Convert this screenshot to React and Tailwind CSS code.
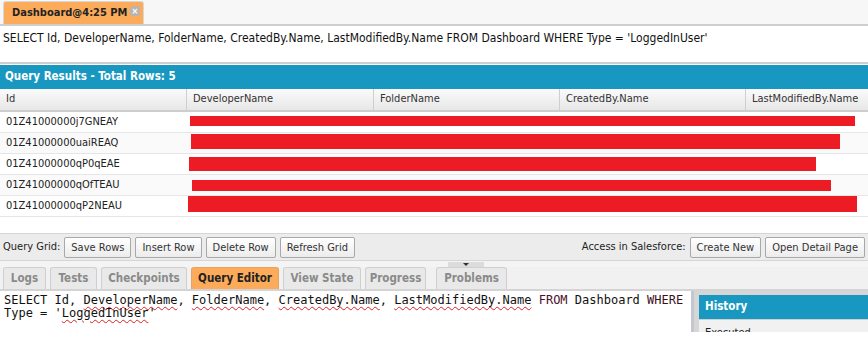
const rows = [
  { id: '01Z41000000j7GNEAY', x1: 190, x2: 855, top: 4, h: 10 },
  { id: '01Z41000000uaiREAQ', x1: 191, x2: 840, top: 1, h: 15 },
  { id: '01Z41000000qP0qEAE', x1: 189, x2: 816, top: 3, h: 14 },
  { id: '01Z41000000qOfTEAU', x1: 192, x2: 831, top: 5, h: 11 },
  { id: '01Z41000000qP2NEAU', x1: 188, x2: 857, top: 0, h: 16 },
]

const cols = ['Id', 'DeveloperName', 'FolderName', 'CreatedBy.Name', 'LastModifiedBy.Name']

const tabs = [
  { label: 'Logs', w: 'w-[43px]' },
  { label: 'Tests', w: 'w-[47px]' },
  { label: 'Checkpoints', w: 'w-[86px]' },
  { label: 'Query Editor', w: 'w-[88px]', active: true },
  { label: 'View State', w: 'w-[78px]' },
  { label: 'Progress', w: 'w-[61px]' },
  { label: 'Problems', w: 'w-[71px]' },
]

function Btn({ children }) {
  return (
    <button className="h-[21px] px-[6px] border border-[#a8a8a8] rounded-[2px] bg-gradient-to-b from-white to-[#ececec] text-[11px] text-[#333] leading-none whitespace-nowrap">
      {children}
    </button>
  )
}

function Sq({ children }) {
  return <span className="underline decoration-wavy decoration-[#e02020] decoration-1 underline-offset-2">{children}</span>
}

export default function App() {
  return (
    <div className="w-[868px] h-[348px] bg-white overflow-hidden text-[11px] text-[#222]" style={{ fontFamily: '"DejaVu Sans Condensed", "Liberation Sans", Arial, sans-serif' }}>
      <div className="h-[332px] flex flex-col overflow-hidden">
        {/* top tab bar */}
        <div className="h-[26px] shrink-0 flex items-end pl-[3px] bg-[#f7f7f7] border-b-2 border-[#cfcfcf]">
          <div className="h-[23px] w-[141px] flex items-center justify-between pl-[8px] pr-[3px] bg-[#fcab5b] border border-b-0 border-[#d8d8d8] rounded-t-[3px]">
            <span className="font-bold text-[11px] text-[#222] whitespace-nowrap">Dashboard@4:25 PM</span>
            <span className="w-[10px] h-[10px] mb-[4px] rounded-[3px] bg-[#b9b4ad] flex items-center justify-center text-white text-[9px] leading-none font-bold">×</span>
          </div>
        </div>

        {/* query text */}
        <div className="h-[38px] shrink-0 px-[3px] pt-[3px] text-[12px] text-[#111] border-b-2 border-[#cfcfcf] whitespace-nowrap">
          SELECT Id, DeveloperName, FolderName, CreatedBy.Name, LastModifiedBy.Name FROM Dashboard WHERE Type = 'LoggedInUser'
        </div>

        {/* results */}
        <div className="h-[24px] mt-[1px] shrink-0 bg-[#1897c0] flex items-center pl-[5px] text-white font-bold text-[11.5px]">
          Query Results - Total Rows: 5
        </div>
        <div className="h-[23px] shrink-0 grid grid-cols-[186px_187px_186px_186px_123px] bg-gradient-to-b from-[#fbfbfb] to-[#e7e7e7] border-b-2 border-[#cdcdcd]">
          {cols.map((c, i) => (
            <div key={c} className={`flex items-center pl-[6px] text-[#333] whitespace-nowrap overflow-hidden ${i > 0 ? 'border-l border-[#cfcfcf]' : ''}`}>{c}</div>
          ))}
        </div>
        {rows.map((r, i) => (
          <div key={r.id} className={`relative h-[21px] shrink-0 flex items-center pl-[6px] border-b border-[#e6e6e6] ${i % 2 ? 'bg-[#fafafa]' : 'bg-white'}`}>
            {r.id}
            <div className="absolute bg-[#ed1c24]" style={{ left: r.x1, width: r.x2 - r.x1, top: r.top, height: r.h }} />
          </div>
        ))}
        <div className="h-[16px] shrink-0" />

        {/* toolbar */}
        <div className="h-[27px] shrink-0 flex items-center justify-between px-[3px] bg-[#ececec] border-t border-[#d6d6d6]">
          <div className="flex items-center gap-[4px]">
            <span>Query Grid:</span>
            <Btn>Save Rows</Btn>
            <Btn>Insert Row</Btn>
            <Btn>Delete Row</Btn>
            <Btn>Refresh Grid</Btn>
          </div>
          <div className="flex items-center gap-[4px]">
            <span>Access in Salesforce:</span>
            <Btn>Create New</Btn>
            <Btn>Open Detail Page</Btn>
          </div>
        </div>

        {/* splitter */}
        <div className="h-[7px] shrink-0 bg-[#f4f4f4] border-t border-[#d6d6d6] flex justify-start pl-[448px]">
          <div className="w-[36px] h-[5px] mt-[1px] bg-[#dcdcdc] flex justify-center">
            <span className="w-0 h-0 mt-[1px] border-l-[3px] border-r-[3px] border-t-[3px] border-l-transparent border-r-transparent border-t-[#333]" />
          </div>
        </div>

        {/* bottom tabs */}
        <div className="h-[24px] shrink-0 flex items-end gap-[4px] pl-[3px] bg-[#f1f1f1] border-b-2 border-[#d4d4d4]">
          {tabs.map(t => (
            <div key={t.label} className={`${t.w} h-[22px] flex items-center justify-center rounded-t-[3px] border border-b-0 font-bold text-[11.5px] whitespace-nowrap ${t.active ? 'bg-[#fcab5b] border-[#e3a463] text-[#222]' : 'bg-[#e9e9e9] border-[#cfcfcf] text-[#8a8a8a]'} ${t.label === 'Problems' ? 'ml-[6px]' : ''}`}>
              {t.label}
            </div>
          ))}
        </div>

        {/* editor + history */}
        <div className="flex-1 flex bg-[#d6d6d6] min-h-0">
          <div className="w-[694px] bg-white border-r-[3px] border-[#c4c6d0] px-[4px] pt-[3px] text-[12px] leading-[12.5px] text-[#111]" style={{ fontFamily: '"DejaVu Sans Mono", monospace' }}>
            SELECT Id, <Sq>DeveloperName</Sq>, <Sq>FolderName</Sq>, <Sq>CreatedBy.Name</Sq>, <Sq>LastModifiedBy.Name</Sq> <span className="text-[#4a0f2a]">FROM</span> Dashboard <span className="text-[#3a1020]">WHERE</span>
            <br />
            Type = '<Sq>LoggedInUser</Sq>'
          </div>
          <div className="w-[5px]" />
          <div className="flex-1 flex flex-col pt-[4px]">
            <div className="h-[24px] bg-[#1897c0] flex items-center pl-[6px] text-white font-bold text-[11.5px]">History</div>
            <div className="flex-1 bg-[#f1f1f1] border-t border-[#cfcfcf] pl-[6px] pt-[5px] overflow-hidden">Executed</div>
          </div>
        </div>
      </div>
    </div>
  )
}
